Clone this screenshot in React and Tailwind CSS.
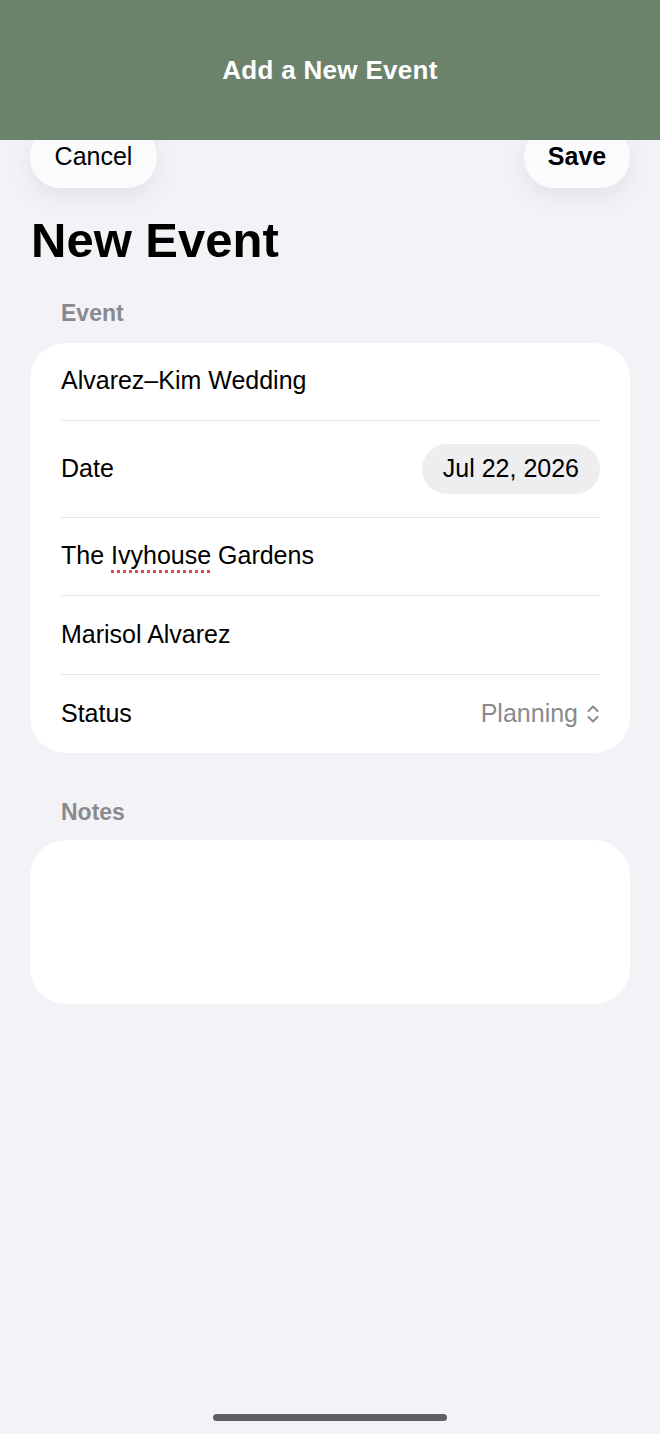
const font = { fontFamily: '"Liberation Sans", Arial, sans-serif' };

function Row({ children, last }) {
  return (
    <div className={`flex items-center justify-between ${last ? "" : "border-b border-[#e3e3e6]"}`}>
      {children}
    </div>
  );
}

function UpDown() {
  return (
    <svg width="14" height="22" viewBox="0 0 14 22" fill="none" stroke="currentColor" strokeWidth="2" strokeLinecap="round" strokeLinejoin="round">
      <path d="M2.5 8 L7 3.5 L11.5 8" />
      <path d="M2.5 14 L7 18.5 L11.5 14" />
    </svg>
  );
}

export default function App() {
  return (
    <div className="flex min-h-[1434px] flex-col bg-[#f2f2f7] text-black" style={font}>
      {/* top bar */}
      <header className="relative z-10 flex h-[140px] items-center justify-center bg-[#6b836b]">
        <h1 className="text-[26px] font-bold tracking-[0.3px] text-white">Add a New Event</h1>
      </header>

      {/* nav buttons - partly under the bar */}
      <div className="-mt-[14px] flex items-center justify-between px-[30px]">
        <button
          type="button"
          className="flex h-[62px] w-[127px] items-center justify-center rounded-[30px] bg-[#fbfbfe] text-[25px] shadow-[0_8px_24px_rgba(0,0,0,0.07)]"
        >
          Cancel
        </button>
        <button
          type="button"
          className="flex h-[62px] w-[106px] items-center justify-center rounded-[30px] bg-[#fbfbfe] text-[25px] font-bold shadow-[0_8px_24px_rgba(0,0,0,0.07)]"
        >
          Save
        </button>
      </div>

      <h2 className="mt-[24px] px-[31px] text-[49px] font-bold leading-[56px]">New Event</h2>

      {/* event section */}
      <div className="mt-[28px] px-[61px] text-[23px] font-bold text-[#8a8a8e]">Event</div>
      <div className="mx-[30px] mt-[12px] rounded-[36px] bg-white pl-[31px] pr-[30px] text-[25px]">
        <Row>
          <div className="flex h-[77px] items-center">Alvarez–Kim Wedding</div>
        </Row>
        <Row>
          <div className="flex h-[96px] items-center">Date</div>
          <span className="flex h-[50px] items-center rounded-full bg-[#eeeef0] px-[21px]">Jul 22, 2026</span>
        </Row>
        <Row>
          <div className="flex h-[77px] items-center">
            The&nbsp;
            <span className="underline decoration-[#e5484d] decoration-dotted decoration-[3px] underline-offset-[6px]">
              Ivyhouse
            </span>
            &nbsp;Gardens
          </div>
        </Row>
        <Row>
          <div className="flex h-[78px] items-center">Marisol Alvarez</div>
        </Row>
        <Row last>
          <div className="flex h-[78px] items-center">Status</div>
          <span className="flex items-center gap-[8px] text-[#8a8a8e]">
            Planning
            <UpDown />
          </span>
        </Row>
      </div>

      {/* notes section */}
      <div className="mt-[42px] px-[61px] text-[23px] font-bold text-[#8a8a8e]">Notes</div>
      <div className="mx-[30px] mt-[11px] h-[164px] rounded-[36px] bg-white" />

      <div className="flex-1" />
      <div className="flex justify-center pb-[13px]">
        <div className="h-[7px] w-[234px] rounded-full bg-[#5f5f63]" />
      </div>
    </div>
  );
}
